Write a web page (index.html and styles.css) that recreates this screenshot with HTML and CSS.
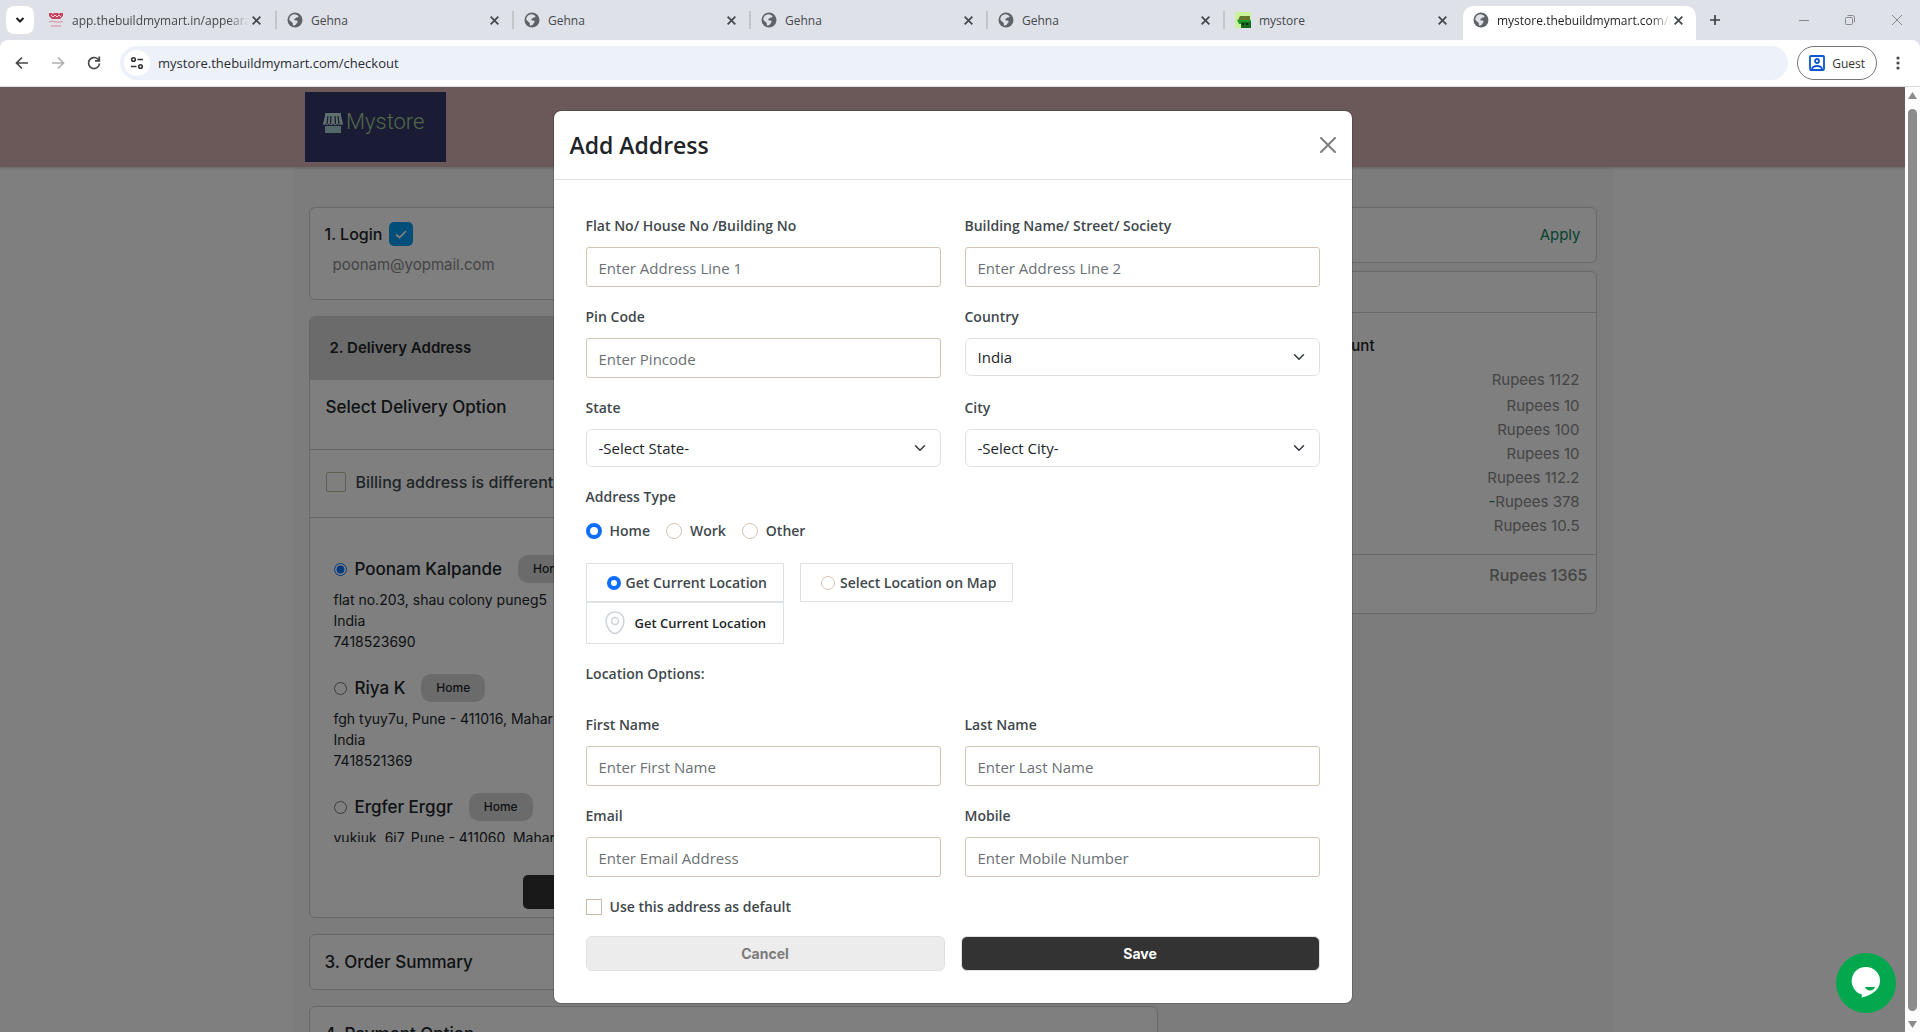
FILE: index.html
```html
<!DOCTYPE html>
<html lang="en">
<head>
    <meta charset="UTF-8">
    <meta name="viewport" content="width=device-width, initial-scale=1.0">
    <title>Checkout</title>
    <link rel="stylesheet" href="styles.css">
</head>
<body>

    <!-- shared icons -->
    <svg class="defs" width="0" height="0">
        <symbol id="globe" viewBox="0 0 16 16">
            <circle cx="8" cy="8" r="7.5" fill="#5f6368"/>
            <path d="M7 2.2c2 0 3.600.8 4.600 2.200-.4 1-1.300 1.200-2.400 1.200-.4 1.200-1.600 1-2 1.800-.2.800.8 1 2.200 1 1.200.2 1.400 1 1.200 1.800-1 .4-1.200 1.800-2.200 2.800-.8.600-1.800.6-2.800.2.600-1 .4-1.600-.2-2.400C4.600 9.800 3 9 2.200 7.200 2.600 4.400 4.600 2.400 7 2.200z" fill="#dee1e6"/>
        </symbol>
        <symbol id="cross" viewBox="0 0 10 10">
            <path d="M1.500 1.500l7 7M8.500 1.500l-7 7" stroke="currentColor" stroke-width="1.600" fill="none"/>
        </symbol>
    </svg>

    <div class="tabs">
        <button class="tab-search" aria-label="Search tabs">
            <svg width="10" height="10" viewBox="0 0 10 10"><path d="M1.500 3l3.500 3.500L8.500 3" fill="none" stroke="#1f1f1f" stroke-width="2"/></svg>
        </button>
        <div class="tab first">
            <svg class="favicon" viewBox="0 0 16 16">
                <path d="M1 1h3l1 1 1-1h4l1 1 1-1h3v3l-3 3H4L1 4z" fill="#c8445f"/>
                <path d="M3 3l2 2 2-2 2 2 2-2 2 2" stroke="#f3d5da" fill="none"/>
                <path d="M1 10c4-2 6 1.500 14-.5M3 14h10" stroke="#d98a98" fill="none"/>
            </svg>
            <span class="tab-title fade">app.thebuildmymart.in/appeara</span>
            <button class="tab-close" aria-label="Close tab"><svg width="11" height="11"><use href="#cross"/></svg></button>
        </div>
        <div class="tab">
            <svg class="favicon"><use href="#globe"/></svg>
            <span class="tab-title">Gehna</span>
            <button class="tab-close" aria-label="Close tab"><svg width="11" height="11"><use href="#cross"/></svg></button>
        </div>
        <div class="tab">
            <svg class="favicon"><use href="#globe"/></svg>
            <span class="tab-title">Gehna</span>
            <button class="tab-close" aria-label="Close tab"><svg width="11" height="11"><use href="#cross"/></svg></button>
        </div>
        <div class="tab">
            <svg class="favicon"><use href="#globe"/></svg>
            <span class="tab-title">Gehna</span>
            <button class="tab-close" aria-label="Close tab"><svg width="11" height="11"><use href="#cross"/></svg></button>
        </div>
        <div class="tab">
            <svg class="favicon"><use href="#globe"/></svg>
            <span class="tab-title">Gehna</span>
            <button class="tab-close" aria-label="Close tab"><svg width="11" height="11"><use href="#cross"/></svg></button>
        </div>
        <div class="tab last">
            <svg class="favicon" viewBox="0 0 16 16">
                <rect width="16" height="16" fill="#c9f29a"/>
                <path d="M5 4h10v4H3z" fill="#5f7a2b"/>
                <path d="M2 8h14v4H4z" fill="#1f9a2f"/>
                <path d="M6 10h10v6H6z" fill="#14691f"/>
                <path d="M7 11h2v2H7zM11 11h2v2h-2z" fill="#0a2d10"/>
            </svg>
            <span class="tab-title">mystore</span>
            <button class="tab-close" aria-label="Close tab"><svg width="11" height="11"><use href="#cross"/></svg></button>
        </div>
        <div class="tab active">
            <svg class="favicon"><use href="#globe"/></svg>
            <span class="tab-title fade">mystore.thebuildmymart.com/c</span>
            <button class="tab-close" aria-label="Close tab"><svg width="11" height="11"><use href="#cross"/></svg></button>
        </div>
        <button class="new-tab" aria-label="New tab">
            <svg width="12" height="12" viewBox="0 0 12 12"><path d="M6 1v10M1 6h10" stroke="#3c4043" stroke-width="1.700"/></svg>
        </button>
        <div class="window-buttons">
            <button aria-label="Minimize"><svg width="10" height="10"><path d="M0 5.500h10" stroke="#888"/></svg></button>
            <button aria-label="Restore"><svg width="10" height="10" fill="none" stroke="#888"><rect x=".5" y="2.500" width="7" height="7" rx="1"/><path d="M2.500 .5h5q2 0 2 2v5"/></svg></button>
            <button aria-label="Close"><svg width="12" height="12"><path d="M1 1l10 10M11 1L1 11" stroke="#888"/></svg></button>
        </div>
    </div>

    <div class="toolbar">
        <button aria-label="Back"><svg width="14" height="14" viewBox="0 0 14 14" fill="none" stroke="#474747" stroke-width="1.700"><path d="M13 7H2M7 1.500L1.500 7 7 12.500"/></svg></button>
        <button aria-label="Forward"><svg width="14" height="14" viewBox="0 0 14 14" fill="none" stroke="#b0b0b0" stroke-width="1.700"><path d="M1 7h11M7 1.500L12.500 7 7 12.500"/></svg></button>
        <button aria-label="Reload"><svg width="14" height="14" viewBox="0 0 14 14" fill="none" stroke="#474747" stroke-width="1.700"><path d="M12.500 7.500A5.500 5.500 0 1 1 10.800 3L12 4.200"/><path d="M12.300 .5v4.300H8"/></svg></button>
        <div class="omnibox">
            <span class="site-info">
                <svg width="14" height="14" viewBox="0 0 14 14" fill="none" stroke="#333" stroke-width="1.600"><circle cx="3.500" cy="3.500" r="1.800"/><path d="M7.500 3.500H13M1 10.500h5.500"/><circle cx="10.500" cy="10.500" r="1.800"/></svg>
            </span>
            <input type="text" aria-label="Address" value="mystore.thebuildmymart.com/checkout">
        </div>
        <button class="guest">
            <svg width="16" height="16" viewBox="0 0 16 16" fill="none" stroke="#0b57d0" stroke-width="1.800"><rect x="1" y="1" width="14" height="14" rx="1"/><circle cx="8" cy="6" r="2"/><path d="M3 14c1-4 9-4 10 0"/></svg>
            Guest
        </button>
        <button class="menu" aria-label="Menu"><svg width="4" height="16" fill="#474747"><circle cx="2" cy="3" r="1.600"/><circle cx="2" cy="8" r="1.600"/><circle cx="2" cy="13" r="1.600"/></svg></button>
    </div>

    <div class="window">
        <div class="site">
            <header>
                <div class="logo">
                    <svg width="22" height="22" viewBox="0 0 22 22">
                        <path d="M3 1h16v3H3z" fill="#bfe0dc"/>
                        <path d="M3 4h16l2 8q-1 2-2.500 0-1.500 2-3 0-2.500 2-4.500 0-2 2-4.500 0-1.500 2-3 0Q2 14 1 12z" fill="#bfe0dc"/>
                        <path d="M3 14h16v7H3z" fill="#a9cfd0"/>
                        <path d="M6 4l-1 8M9 4l-.5 8M13 4l.5 8M16 4l1 8" stroke="#34386a" stroke-width="1.300"/>
                    </svg>
                    <span>Mystore</span>
                </div>
            </header>

            <div class="container">
                <div class="steps">
                    <div class="card login">
                        <div class="step-title">1. Login
                            <span class="done"><svg width="14" height="14" viewBox="0 0 14 14"><path d="M2 7.500l3.500 3L12 4" fill="none" stroke="#fff" stroke-width="1.700"/></svg></span>
                        </div>
                        <p class="user">poonam@yopmail.com</p>
                    </div>

                    <div class="card delivery">
                        <h3>2. Delivery Address</h3>
                        <div class="delivery-option">Select Delivery Option</div>
                        <div class="billing">
                            <input type="checkbox" id="billing">
                            <label for="billing">Billing address is different</label>
                        </div>
                        <div class="address-list">
                            <div class="address">
                                <div class="address-name">
                                    <input type="radio" name="saved" id="addr1" checked>
                                    <label for="addr1">Poonam Kalpande</label>
                                    <span class="badge">Home</span>
                                </div>
                                <p>flat no.203, shau colony puneg5<br>India<br>7418523690</p>
                            </div>
                            <div class="address">
                                <div class="address-name">
                                    <input type="radio" name="saved" id="addr2">
                                    <label for="addr2">Riya K</label>
                                    <span class="badge">Home</span>
                                </div>
                                <p>fgh tyuy7u, Pune - 411016, Mahar<br>India<br>7418521369</p>
                            </div>
                            <div class="address">
                                <div class="address-name">
                                    <input type="radio" name="saved" id="addr3">
                                    <label for="addr3">Ergfer Erggr</label>
                                    <span class="badge">Home</span>
                                </div>
                                <p>yukiuk, 6i7, Pune - 411060, Mahar</p>
                            </div>
                        </div>
                        <button class="deliver" aria-label="Deliver here"></button>
                    </div>

                    <div class="card step">3. Order Summary</div>
                    <div class="card step">4. Payment Option</div>
                </div>

                <div class="totals">
                    <div class="card coupon"><a href="#">Apply</a></div>
                    <div class="card prices">
                        <div class="prices-head"></div>
                        <div class="prices-title">Amount</div>
                        <ul>
                            <li>Rupees 1122</li>
                            <li>Rupees 10</li>
                            <li>Rupees 100</li>
                            <li>Rupees 10</li>
                            <li>Rupees 112.2</li>
                            <li><span class="minus">-</span>Rupees 378</li>
                            <li>Rupees 10.5</li>
                        </ul>
                        <div class="grand-total">Rupees 1365</div>
                    </div>
                </div>
            </div>

            <div class="overlay">
                <div class="modal" role="dialog" aria-labelledby="modalTitle">
                    <div class="modal-header">
                        <h2 id="modalTitle">Add Address</h2>
                        <button class="close" aria-label="Close"><svg width="16" height="16"><path d="M1 1l14 14M15 1L1 15" stroke="#7f7f7f" stroke-width="2" stroke-linecap="round"/></svg></button>
                    </div>
                    <form class="modal-body">
                        <div class="fields">
                            <div class="field">
                                <label for="line1">Flat No/ House No /Building No</label>
                                <input type="text" id="line1" placeholder="Enter Address Line 1">
                            </div>
                            <div class="field">
                                <label for="line2">Building Name/ Street/ Society</label>
                                <input type="text" id="line2" placeholder="Enter Address Line 2">
                            </div>
                            <div class="field">
                                <label for="pin">Pin Code</label>
                                <input type="text" id="pin" placeholder="Enter Pincode">
                            </div>
                            <div class="field">
                                <label for="country">Country</label>
                                <select id="country"><option>India</option></select>
                            </div>
                            <div class="field">
                                <label for="state">State</label>
                                <select id="state"><option>-Select State-</option></select>
                            </div>
                            <div class="field">
                                <label for="city">City</label>
                                <select id="city"><option>-Select City-</option></select>
                            </div>
                        </div>

                        <div class="group-title">Address Type</div>
                        <div class="address-type">
                            <input type="radio" name="type" id="home" checked><label for="home">Home</label>
                            <input type="radio" name="type" id="work"><label for="work">Work</label>
                            <input type="radio" name="type" id="other"><label for="other">Other</label>
                        </div>

                        <div class="location">
                            <div class="location-box">
                                <input type="radio" name="location" id="current" checked>
                                <label for="current">Get Current Location</label>
                            </div>
                            <div class="location-box">
                                <input type="radio" name="location" id="map">
                                <label for="map">Select Location on Map</label>
                            </div>
                            <button type="button" class="locate">
                                <svg width="20" height="24" viewBox="0 0 20 24" fill="none" stroke="#ced4da" stroke-width="1.500"><path d="M10 1c5.500 0 9 4 9 9 0 6-5 12.500-9 12.500S1 16 1 10c0-5 3.500-9 9-9z"/><circle cx="10" cy="10" r="3.500"/></svg>
                                Get Current Location
                            </button>
                        </div>
                        <div class="group-title">Location Options:</div>

                        <div class="fields contact">
                            <div class="field">
                                <label for="firstName">First Name</label>
                                <input type="text" id="firstName" placeholder="Enter First Name">
                            </div>
                            <div class="field">
                                <label for="lastName">Last Name</label>
                                <input type="text" id="lastName" placeholder="Enter Last Name">
                            </div>
                            <div class="field">
                                <label for="email">Email</label>
                                <input type="email" id="email" placeholder="Enter Email Address">
                            </div>
                            <div class="field">
                                <label for="mobile">Mobile</label>
                                <input type="tel" id="mobile" placeholder="Enter Mobile Number">
                            </div>
                        </div>

                        <div class="default-address">
                            <input type="checkbox" id="default">
                            <label for="default">Use this address as default</label>
                        </div>
                        <div class="buttons">
                            <button type="button" class="cancel">Cancel</button>
                            <button type="submit" class="save">Save</button>
                        </div>
                    </form>
                </div>
            </div>

            <button class="chat" aria-label="Chat">
                <svg width="32" height="34" viewBox="0 0 32 34">
                    <path d="M16 1a14 14 0 0 1 14 14c0 8-7 14-18.500 16.500L12 28.500A14 14 0 0 1 16 1z" fill="#fff"/>
                    <path d="M15 21h10c-1 4.500-9 4.500-10 0z" fill="#03a84e"/>
                </svg>
            </button>
        </div>

        <div class="scrollbar">
            <svg width="9" height="7"><path d="M4.500 0L9 7H0z" fill="#8b8b8b"/></svg>
            <div class="thumb"></div>
            <svg width="9" height="7"><path d="M0 0h9L4.500 7z" fill="#8b8b8b"/></svg>
        </div>
    </div>

</body>
</html>
```
FILE: styles.css
```css
* {
    box-sizing: border-box;
}

body {
    margin: 0;
    height: 100vh;
    display: flex;
    flex-direction: column;
    overflow: hidden;
    font-family: "Open Sans", "Noto Sans", sans-serif;
    background-color: #dee1e8;
}

button {
    border: none;
    background: none;
    padding: 0;
    font-family: inherit;
    cursor: pointer;
}

svg {
    display: block;
    flex-shrink: 0;
}

.defs {
    position: absolute;
}

/* browser tabs */
.tabs {
    display: flex;
    align-items: center;
    height: 40px;
    padding-left: 6px;
}

.tab-search {
    width: 28px;
    height: 28px;
    margin-right: 4px;
    border-radius: 8px;
    background-color: white;
    display: flex;
    align-items: center;
    justify-content: center;
}

.tab {
    display: flex;
    align-items: center;
    width: 237px;
    height: 18px;
    padding: 0 12px 0 10px;
    gap: 8px;
    font-size: 12px;
    color: #45484c;
    border-right: 2px solid #c3c5c9;
}

.tab.first {
    width: 239px;
    padding-right: 13px;
}

.tab.last {
    border-right-color: transparent;
}

.tab.active {
    width: 233px;
    height: 34px;
    align-self: flex-end;
    padding-bottom: 6px;
    margin-left: 1px;
    border: none;
    border-radius: 10px 10px 0 0;
    background-color: white;
    color: #1f1f1f;
}

.favicon {
    width: 16px;
    height: 16px;
}

.tab-title {
    flex: 1;
    min-width: 0;
    overflow: hidden;
    white-space: nowrap;
}

.fade {
    margin-right: -6px;
    -webkit-mask-image: linear-gradient(to right, black 88%, transparent);
    mask-image: linear-gradient(to right, black 88%, transparent);
}

.tab-close {
    color: #45484c;
}

.new-tab {
    margin-left: 13px;
}

.window-buttons {
    display: flex;
    align-items: center;
    gap: 36px;
    margin-left: auto;
    padding-right: 17px;
}

/* browser toolbar */
.toolbar {
    display: flex;
    align-items: center;
    height: 47px;
    padding: 0 20px 0 15px;
    gap: 22px;
    background-color: white;
    border-bottom: 1px solid #dcdcdc;
    border-radius: 8px 8px 0 0;
}

.omnibox {
    display: flex;
    align-items: center;
    flex: 1;
    height: 34px;
    margin: 0 -13px 0 -3px;
    padding: 0 4px;
    gap: 8px;
    border-radius: 17px;
    background-color: #edf1fa;
}

.site-info {
    width: 26px;
    height: 26px;
    border-radius: 50%;
    background-color: white;
    display: flex;
    align-items: center;
    justify-content: center;
}

.omnibox input {
    flex: 1;
    padding: 0;
    border: none;
    background: none;
    font-family: inherit;
    font-size: 13px;
    color: #2b2d30;
}

.guest {
    display: flex;
    align-items: center;
    height: 34px;
    margin-right: -3px;
    padding: 0 11px;
    gap: 7px;
    border: 1px solid #747775;
    border-radius: 17px;
    font-size: 12px;
    color: #333;
}

/* page window */
.window {
    display: flex;
    flex: 1;
    min-height: 0;
}

.site {
    position: relative;
    flex: 1;
    overflow: hidden;
    background-color: white;
    font-family: Inter, sans-serif;
    color: #212529;
}

header {
    height: 80px;
    padding: 5px 305px;
    background-color: #d7b3b3;
    box-shadow: 0 1px 3px rgba(0, 0, 0, 0.2);
    position: relative;
}

.logo {
    display: flex;
    width: 141px;
    height: 70px;
    padding: 17px;
    gap: 2px;
    background-color: #34386a;
    color: #a5d096;
    font-family: Roboto, sans-serif;
    font-size: 22px;
    font-weight: 300;
    line-height: 26px;
}

.logo svg {
    margin-top: 3px;
}

.container {
    display: flex;
    align-items: flex-start;
    gap: 14px;
    max-width: 1320px;
    margin: 0 auto;
    padding: 40px 16px;
    background-color: #f8f8f8;
}

.steps {
    flex: 2;
    display: flex;
    flex-direction: column;
    gap: 16px;
}

.totals {
    flex: 1;
    display: flex;
    flex-direction: column;
    gap: 8px;
}

.card {
    border: 1px solid #d0d0d0;
    border-radius: 6px;
    background-color: #fefefe;
}

.login {
    height: 93px;
    padding: 14px 15px;
}

.step-title {
    display: flex;
    align-items: center;
    gap: 7px;
    font-size: 16px;
    font-weight: 500;
    line-height: 24px;
}

.done {
    width: 24px;
    height: 24px;
    border-radius: 5px;
    background-color: #009ef7;
    display: flex;
    align-items: center;
    justify-content: center;
}

.user {
    margin: 8px;
    font-size: 15px;
    line-height: 22px;
    color: #8a8a8a;
}

.delivery {
    height: 602px;
    overflow: hidden;
}

.delivery h3 {
    margin: 0;
    padding: 19px 20px 20px;
    background-color: #d6d6d6;
    font-size: 15px;
    font-weight: 600;
    line-height: 24px;
}

.delivery-option {
    height: 70px;
    padding: 15px 16px;
    border-bottom: 1px solid #d0d0d0;
    font-size: 17px;
    font-weight: 500;
    line-height: 24px;
}

.billing {
    display: flex;
    align-items: center;
    height: 68px;
    padding: 0 16px 3px;
    gap: 10px;
    border-bottom: 1px solid #d0d0d0;
    font-size: 16px;
    font-weight: 500;
    color: #3f4a4f;
}

.billing input,
.default-address input {
    appearance: none;
    width: 20px;
    height: 20px;
    margin: 0;
    border: 1px solid #c5bba8;
    border-radius: 2px;
}

.address-list {
    height: 324px;
    padding: 37px 24px 0;
    overflow: hidden;
}

.address {
    height: 119px;
}

.address-name {
    display: flex;
    align-items: center;
    gap: 8px;
    font-size: 17px;
    font-weight: 500;
}

.address-name input {
    width: 13px;
    height: 13px;
    margin: 0;
}

.badge {
    margin-left: 8px;
    padding: 0 15px;
    border-radius: 10px;
    background-color: #d6d6d6;
    font-size: 12px;
    line-height: 28px;
}

.address p {
    margin: 6px 0;
    font-size: 14px;
    line-height: 21px;
}

.deliver {
    display: block;
    width: 420px;
    height: 34px;
    margin: 33px auto;
    border-radius: 5px;
    background-color: #333;
}

.step {
    padding: 15px;
    font-size: 17px;
    font-weight: 500;
    line-height: 24px;
}

.coupon {
    padding: 15px;
    text-align: right;
    font-size: 15px;
    line-height: 24px;
}

.coupon a {
    color: #0c8560;
    text-decoration: none;
}

.prices {
    height: 343px;
    color: #8a8a8a;
    font-size: 15px;
}

.prices-head {
    height: 41px;
    border-bottom: 1px solid #d0d0d0;
}

.prices-title {
    padding: 21px 221px 10px 0;
    text-align: right;
    font-weight: 500;
    line-height: 24px;
    color: #212529;
}

.prices ul {
    margin: 0;
    padding: 0 16px 16px;
    border-bottom: 1px solid #d0d0d0;
    list-style: none;
    text-align: right;
}

.prices li {
    line-height: 24px;
}

.prices li:first-child {
    margin-bottom: 2px;
}

.minus {
    color: #0c8560;
}

.grand-total {
    padding: 8px;
    text-align: right;
    font-size: 16px;
    font-weight: 500;
    line-height: 24px;
}

/* modal */
.overlay {
    position: absolute;
    top: 0;
    left: 0;
    right: 0;
    bottom: 0;
    padding-top: 23px;
    background-color: rgba(0, 0, 0, 0.5);
    font-family: "Open Sans", "Noto Sans", sans-serif;
}

.modal {
    max-width: 800px;
    margin: 0 auto;
    border: 1px solid rgba(0, 0, 0, 0.17);
    border-radius: 8px;
    background-color: white;
    background-clip: padding-box;
}

.modal-header {
    display: flex;
    align-items: center;
    justify-content: space-between;
    height: 69px;
    padding: 0 16px;
    border-bottom: 1px solid #dee2e6;
}

.modal-header h2 {
    margin: 0;
    font-size: 23px;
    font-weight: 600;
}

.modal-body {
    padding: 34px 32px 32px;
    font-size: 15px;
    line-height: 24px;
}

.modal-body label,
.group-title {
    color: #3f484c;
    font-size: 14px;
    font-weight: 600;
}

.fields {
    display: grid;
    grid-template-columns: 1fr 1fr;
    gap: 18px 24px;
    align-items: start;
    margin-bottom: 18px;
}

.field label {
    display: block;
    margin-bottom: 9px;
}

.field input,
.field select {
    display: block;
    width: 100%;
    height: 40px;
    padding: 2px 12px 0;
    border: 1px solid #d0c5b5;
    border-radius: 3px;
    background-color: white;
    font-family: inherit;
    font-size: 15px;
    color: #212529;
}

.field input::placeholder {
    color: #6c7075;
}

.field select {
    appearance: none;
    height: 38px;
    padding: 0 12px;
    border-color: #dee2e6;
    border-radius: 6px;
    background-image: url("data:image/svg+xml,%3Csvg xmlns='http://www.w3.org/2000/svg' viewBox='0 0 16 16'%3E%3Cpath fill='none' stroke='%23343a40' stroke-linecap='round' stroke-linejoin='round' stroke-width='2' d='m2 5 6 6 6-6'/%3E%3C/svg%3E");
    background-repeat: no-repeat;
    background-position: right 14px center;
    background-size: 12px;
}

.address-type {
    display: flex;
    align-items: center;
    gap: 8px;
    margin: 10px 0 20px;
}

.address-type label {
    margin-right: 8px;
}

.address-type input,
.location-box input {
    appearance: none;
    width: 16px;
    height: 16px;
    margin: 0;
    border: 1px solid #d0c5b5;
    border-radius: 50%;
}

.address-type input:checked,
.location-box input:checked {
    border: 4px solid #0d6efd;
}

.location {
    display: grid;
    grid-template-columns: max-content max-content;
    column-gap: 16px;
    margin-bottom: 18px;
}

.location-box {
    display: flex;
    align-items: center;
    height: 39px;
    padding: 0 16px 0 20px;
    gap: 5px;
    border: 1px solid #dee2e6;
}

.location-box input {
    width: 14px;
    height: 14px;
}

.locate {
    display: flex;
    align-items: center;
    height: 42px;
    padding: 0 16px 0 18px;
    gap: 10px;
    border: 1px solid #dee2e6;
    color: #212529;
    font-size: 13px;
    font-weight: 600;
}

.contact {
    margin-top: 27px;
}

.default-address {
    display: flex;
    align-items: center;
    gap: 8px;
    margin-bottom: 17px;
}

.default-address input {
    width: 16px;
    height: 16px;
    border-radius: 0;
}

.buttons {
    display: grid;
    grid-template-columns: 1fr 1fr;
    gap: 16px;
}

.buttons button {
    height: 35px;
    border: 1px solid #dee2e6;
    border-radius: 6px;
    font-family: Inter, sans-serif;
    font-size: 14px;
    font-weight: 700;
}

.buttons .cancel {
    background-color: #ececec;
    color: #7b7b7b;
}

.buttons .save {
    background-color: #333;
    color: white;
}

.chat {
    position: absolute;
    right: 9px;
    bottom: 19px;
    width: 60px;
    height: 60px;
    border-radius: 50%;
    background-color: #03a84e;
    display: flex;
    align-items: center;
    justify-content: center;
}

.scrollbar {
    display: flex;
    flex-direction: column;
    align-items: center;
    width: 15px;
    padding: 5px 0 4px;
    gap: 10px;
    background-color: #fcfcfc;
}

.thumb {
    flex: 1;
    width: 9px;
    border-radius: 5px;
    background-color: #8b8b8b;
}
```
